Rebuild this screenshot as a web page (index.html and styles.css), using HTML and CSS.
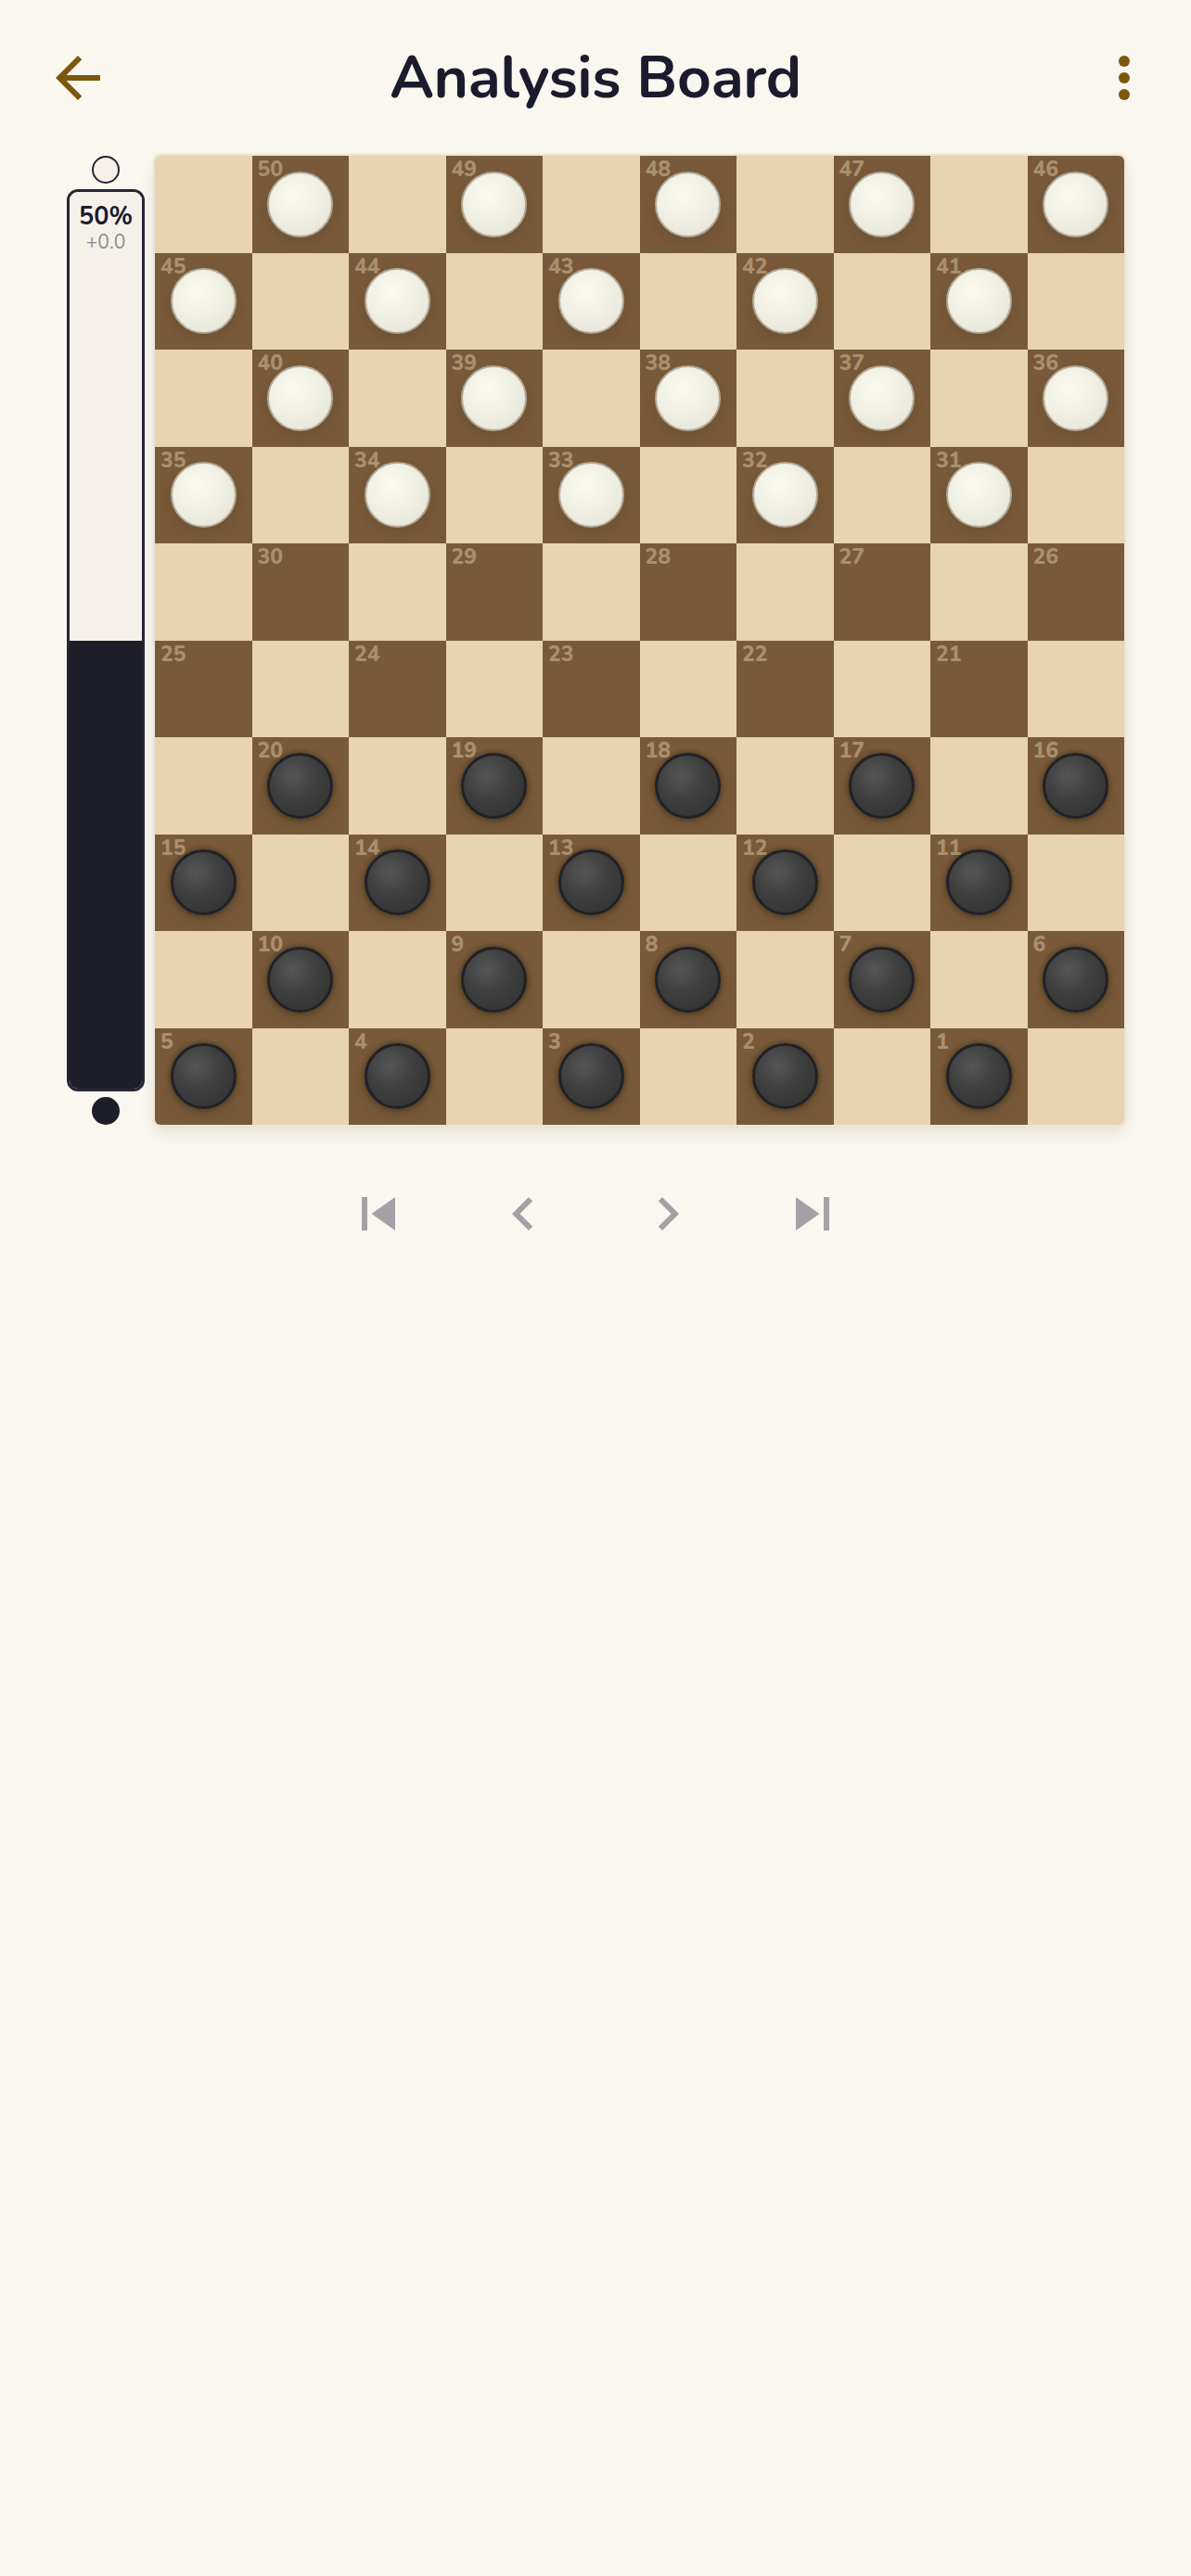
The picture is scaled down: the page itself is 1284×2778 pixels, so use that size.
FILE: index.html
```html
<!DOCTYPE html>
<html lang="en">
<head>
<meta charset="utf-8">
<title>Analysis Board</title>
<link rel="stylesheet" href="styles.css">
</head>
<body>
<div class="app">
  <header class="topbar">
    <button class="icon-btn back" aria-label="Back">
      <svg viewBox="0 0 24 24" width="72" height="72"><path d="M20 11H7.83l5.59-5.59L12 4l-8 8 8 8 1.41-1.41L7.83 13H20v-2z"/></svg>
    </button>
    <h1 class="title">Analysis Board</h1>
    <button class="icon-btn more" aria-label="More">
      <svg viewBox="0 0 24 24" width="72" height="72"><circle cx="12" cy="6" r="2"/><circle cx="12" cy="12" r="2"/><circle cx="12" cy="18" r="2"/></svg>
    </button>
  </header>

  <main class="play">
    <div class="eval">
      <div class="eval-dot white"></div>
      <div class="eval-bar">
        <div class="eval-white" style="flex-basis:50%">
          <div class="eval-pct">50%</div>
          <div class="eval-score">+0.0</div>
        </div>
        <div class="eval-black"></div>
      </div>
      <div class="eval-dot black"></div>
    </div>

    <div class="board">
      <div class="sq"></div><div class="sq d"><span class="n">50</span><i class="pc w"></i></div><div class="sq"></div><div class="sq d"><span class="n">49</span><i class="pc w"></i></div><div class="sq"></div><div class="sq d"><span class="n">48</span><i class="pc w"></i></div><div class="sq"></div><div class="sq d"><span class="n">47</span><i class="pc w"></i></div><div class="sq"></div><div class="sq d"><span class="n">46</span><i class="pc w"></i></div>
      <div class="sq d"><span class="n">45</span><i class="pc w"></i></div><div class="sq"></div><div class="sq d"><span class="n">44</span><i class="pc w"></i></div><div class="sq"></div><div class="sq d"><span class="n">43</span><i class="pc w"></i></div><div class="sq"></div><div class="sq d"><span class="n">42</span><i class="pc w"></i></div><div class="sq"></div><div class="sq d"><span class="n">41</span><i class="pc w"></i></div><div class="sq"></div>
      <div class="sq"></div><div class="sq d"><span class="n">40</span><i class="pc w"></i></div><div class="sq"></div><div class="sq d"><span class="n">39</span><i class="pc w"></i></div><div class="sq"></div><div class="sq d"><span class="n">38</span><i class="pc w"></i></div><div class="sq"></div><div class="sq d"><span class="n">37</span><i class="pc w"></i></div><div class="sq"></div><div class="sq d"><span class="n">36</span><i class="pc w"></i></div>
      <div class="sq d"><span class="n">35</span><i class="pc w"></i></div><div class="sq"></div><div class="sq d"><span class="n">34</span><i class="pc w"></i></div><div class="sq"></div><div class="sq d"><span class="n">33</span><i class="pc w"></i></div><div class="sq"></div><div class="sq d"><span class="n">32</span><i class="pc w"></i></div><div class="sq"></div><div class="sq d"><span class="n">31</span><i class="pc w"></i></div><div class="sq"></div>
      <div class="sq"></div><div class="sq d"><span class="n">30</span></div><div class="sq"></div><div class="sq d"><span class="n">29</span></div><div class="sq"></div><div class="sq d"><span class="n">28</span></div><div class="sq"></div><div class="sq d"><span class="n">27</span></div><div class="sq"></div><div class="sq d"><span class="n">26</span></div>
      <div class="sq d"><span class="n">25</span></div><div class="sq"></div><div class="sq d"><span class="n">24</span></div><div class="sq"></div><div class="sq d"><span class="n">23</span></div><div class="sq"></div><div class="sq d"><span class="n">22</span></div><div class="sq"></div><div class="sq d"><span class="n">21</span></div><div class="sq"></div>
      <div class="sq"></div><div class="sq d"><span class="n">20</span><i class="pc b"></i></div><div class="sq"></div><div class="sq d"><span class="n">19</span><i class="pc b"></i></div><div class="sq"></div><div class="sq d"><span class="n">18</span><i class="pc b"></i></div><div class="sq"></div><div class="sq d"><span class="n">17</span><i class="pc b"></i></div><div class="sq"></div><div class="sq d"><span class="n">16</span><i class="pc b"></i></div>
      <div class="sq d"><span class="n">15</span><i class="pc b"></i></div><div class="sq"></div><div class="sq d"><span class="n">14</span><i class="pc b"></i></div><div class="sq"></div><div class="sq d"><span class="n">13</span><i class="pc b"></i></div><div class="sq"></div><div class="sq d"><span class="n">12</span><i class="pc b"></i></div><div class="sq"></div><div class="sq d"><span class="n">11</span><i class="pc b"></i></div><div class="sq"></div>
      <div class="sq"></div><div class="sq d"><span class="n">10</span><i class="pc b"></i></div><div class="sq"></div><div class="sq d"><span class="n">9</span><i class="pc b"></i></div><div class="sq"></div><div class="sq d"><span class="n">8</span><i class="pc b"></i></div><div class="sq"></div><div class="sq d"><span class="n">7</span><i class="pc b"></i></div><div class="sq"></div><div class="sq d"><span class="n">6</span><i class="pc b"></i></div>
      <div class="sq d"><span class="n">5</span><i class="pc b"></i></div><div class="sq"></div><div class="sq d"><span class="n">4</span><i class="pc b"></i></div><div class="sq"></div><div class="sq d"><span class="n">3</span><i class="pc b"></i></div><div class="sq"></div><div class="sq d"><span class="n">2</span><i class="pc b"></i></div><div class="sq"></div><div class="sq d"><span class="n">1</span><i class="pc b"></i></div><div class="sq"></div>
    </div>
  </main>

  <nav class="moves">
    <button class="nav-btn" aria-label="First move">
      <svg viewBox="0 0 24 24" width="72" height="72"><path d="M6 6h2v12H6zm3.5 6l8.5 6V6z"/></svg>
    </button>
    <button class="nav-btn" aria-label="Previous move">
      <svg viewBox="0 0 24 24" width="72" height="72"><path d="M15.41 7.41L14 6l-6 6 6 6 1.41-1.41L10.83 12z"/></svg>
    </button>
    <button class="nav-btn" aria-label="Next move">
      <svg viewBox="0 0 24 24" width="72" height="72"><path d="M10 6L8.59 7.41 13.17 12l-4.58 4.59L10 18l6-6z"/></svg>
    </button>
    <button class="nav-btn" aria-label="Last move">
      <svg viewBox="0 0 24 24" width="72" height="72"><path d="M6 18l8.5-6L6 6v12zM16 6v12h2V6h-2z"/></svg>
    </button>
  </nav>
</div>
</body>
</html>
```

FILE: styles.css
```css
* { box-sizing: border-box; }
html, body {
  margin: 0;
  padding: 0;
  background: #faf7f0;
}
body {
  font-family: "Nunito", "Lato", "Noto Sans", sans-serif;
  color: #1c1c2e;
  min-height: 2778px;
}
.app {
  width: 1284px;
}
.topbar {
  height: 167px;
  display: grid;
  grid-template-columns: 1fr auto 1fr;
  align-items: center;
  padding: 0 36px;
}
.icon-btn {
  width: 72px;
  height: 72px;
  padding: 0;
  border: 0;
  background: none;
  fill: #7c580d;
  display: flex;
}
.icon-btn.back {
  justify-self: start;
  margin-left: 12px;
}
.icon-btn.more {
  justify-self: end;
}
.title {
  margin: 0;
  font-size: 64px;
  font-weight: 700;
  letter-spacing: -0.3px;
  color: #1b1b2d;
  line-height: 1;
}
.play {
  display: flex;
  gap: 11px;
  padding: 0 72px;
}
.eval {
  width: 84px;
  display: flex;
  flex-direction: column;
  align-items: center;
  gap: 6px;
  padding-top: 1px;
}
.eval-dot {
  width: 30px;
  height: 30px;
  border-radius: 50%;
  flex: none;
}
.eval-dot.white {
  background: #f5f0e9;
  border: 2px solid #262633;
}
.eval-dot.black {
  background: #1d1e28;
}
.eval-bar {
  flex: 1;
  width: 84px;
  border: 3px solid #262633;
  border-radius: 12px;
  overflow: hidden;
  display: flex;
  flex-direction: column;
}
.eval-white {
  background: #f5f1ea;
  display: flex;
  flex-direction: column;
  align-items: center;
  padding-top: 11px;
}
.eval-black {
  flex: 1;
  background: #1d1e28;
}
.eval-pct {
  font-size: 27px;
  font-weight: 700;
  color: #1b1b2d;
  line-height: 32px;
}
.eval-score {
  font-size: 21px;
  color: #8c8c8c;
  line-height: 23px;
}
.board {
  width: 1045px;
  height: 1045px;
  display: grid;
  grid-template-columns: repeat(10, 1fr);
  grid-template-rows: repeat(10, 1fr);
  border-radius: 6px;
  overflow: hidden;
  box-shadow: 0 0 0 2px #ebe4da, 0 8px 18px rgba(60, 40, 20, 0.12);
  margin-top: 1px;
}
.sq {
  background: #e8d4b0;
  position: relative;
  display: flex;
  align-items: center;
  justify-content: center;
}
.sq.d {
  background: #785a3a;
}
.n {
  position: absolute;
  top: 3px;
  left: 6px;
  font-family: "Nunito", "Lato", "Noto Sans", sans-serif;
  font-weight: 800;
  font-size: 23px;
  line-height: 24px;
  color: rgba(232, 212, 176, 0.45);
}
.pc {
  width: 71px;
  height: 71px;
  border-radius: 50%;
  display: block;
}
.pc.w {
  background: radial-gradient(circle at 40% 35%, #fbf9ee 0%, #f1f0e4 45%, #e8e7da 78%, #f0efe5 84%, #e6e4d6 92%);
  border: 2.5px solid #b2a898;
  box-shadow: 0 6px 12px rgba(40, 25, 10, 0.12);
}
.pc.b {
  background: radial-gradient(circle at 38% 33%, #565656 0%, #3e3e3e 45%, #353535 80%, #3b3b3b 86%, #303030 94%);
  border: 3px solid #212226;
  box-shadow: 0 0 4px 2px rgba(40, 25, 10, 0.35), 0 8px 14px rgba(40, 25, 10, 0.15);
}
.moves {
  display: flex;
  justify-content: center;
  gap: 84px;
  margin-top: 60px;
}
.nav-btn {
  width: 72px;
  height: 72px;
  padding: 0;
  border: 0;
  background: none;
  fill: #a3a1a6;
  display: flex;
}
```
